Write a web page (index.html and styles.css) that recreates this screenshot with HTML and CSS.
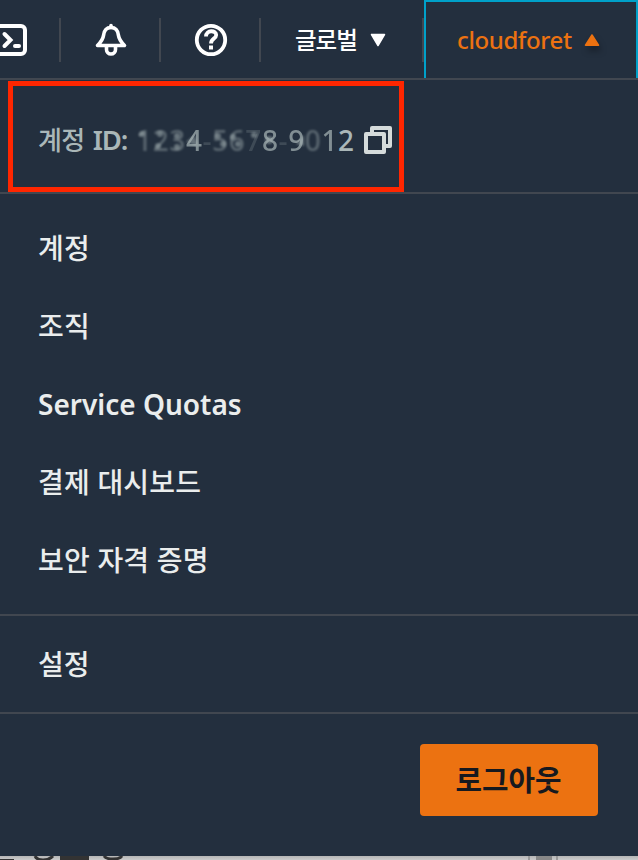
FILE: index.html
```html
<!DOCTYPE html>
<html lang="ko">
<head>
<meta charset="utf-8">
<title>계정 메뉴</title>
<link rel="stylesheet" href="styles.css">
</head>
<body>
<div class="page">
  <header class="nav">
    <div class="nav-item nav-shell">
      <svg width="28" height="34" viewBox="0 0 28 34" fill="none" stroke="#fff" stroke-width="4">
        <rect x="-6" y="3" width="31" height="28" rx="4"/>
        <path d="M4.500 11l6 6-6 6" stroke-width="4" stroke-linecap="round"/>
        <path d="M15 23h4" stroke-linecap="round"/>
      </svg>
    </div>
    <div class="nav-item nav-icon">
      <svg width="34" height="34" viewBox="0 0 34 34" fill="none" stroke="#fff" stroke-width="3.6" stroke-linejoin="round">
        <path d="M17 2.500v2" stroke-linecap="round"/>
        <path d="M3.500 22.500C7.500 18.500 9 16.500 9.500 12.500C10 8 12.500 4.500 17 4.500s7 3.500 7.500 8C25 16.500 26.500 18.500 30.500 22.500z"/>
        <path d="M12.500 23.500v3a4.500 4.500 0 0 0 9 0v-3"/>
      </svg>
    </div>
    <div class="nav-item nav-icon">
      <svg width="34" height="34" viewBox="0 0 34 34" fill="none" stroke="#fff" stroke-width="3.800">
        <circle cx="17" cy="17" r="14.200"/>
        <path d="M12 13.500c0-7 10.200-6.500 10.200-1.500 0 3.500-5.200 3.800-5.200 8.500"/>
        <path d="M15 24.500h4" stroke-width="4"/>
      </svg>
    </div>
    <div class="nav-item nav-region">
      <span>글로벌</span>
      <svg width="16" height="14" viewBox="0 0 16 14"><path d="M1.500 1.500h13L8 12.500z" fill="#fff" stroke="#fff" stroke-width="1.500" stroke-linejoin="round"/></svg>
    </div>
    <div class="nav-account">
      <span>cloudforet</span>
      <svg class="caret-up" width="16" height="14" viewBox="0 0 16 14"><path d="M1.500 12.200h13L8 2z" fill="#ec7211" stroke="#ec7211" stroke-width="1.500" stroke-linejoin="round"/></svg>
    </div>
  </header>
  <section class="account-id">
    <span class="id-label">계정 <span class="id-latin">ID:</span></span>
    <span class="id-number"><span class="faint">1</span><span class="faint">2</span><span class="faint">3</span><span class="mid">4</span><span class="dim">-</span><span class="faint">5</span><span class="faint">6</span><span class="dim">7</span><span class="mid">8</span><span class="dim">-</span><span class="mid">9</span><span class="faint">0</span><span class="mid">1</span><span>2</span><svg class="smudge" width="217" height="20" viewBox="0 0 217 20" fill="#aab7b8">
      <circle cx="6" cy="4" r="3"/><circle cx="24" cy="4" r="3"/><circle cx="22" cy="16" r="3"/><circle cx="41" cy="6" r="3"/><circle cx="41" cy="17" r="3"/><path d="M50 12l8-7 5 12z"/><circle cx="82" cy="6" r="3"/><circle cx="87" cy="14" r="3"/><circle cx="97" cy="7" r="3"/><circle cx="102" cy="14" r="3"/><circle cx="118" cy="5" r="3"/><circle cx="133" cy="10" r="4"/><path d="M160 14l8-9v11z"/></svg></span>
    <svg class="copy" width="28" height="28" viewBox="0 0 28 28" fill="none" stroke="#d5dbdb" stroke-width="4" stroke-linejoin="round">
      <path d="M8 6V2h18v18h-4"/>
      <rect x="2" y="8" width="18" height="18"/>
    </svg>
    <div class="highlight"></div>
  </section>
  <ul class="menu">
    <li>계정</li>
    <li>조직</li>
    <li class="latin">Service Quotas</li>
    <li>결제 대시보드</li>
    <li>보안 자격 증명</li>
  </ul>
  <section class="settings">설정</section>
  <footer class="actions"><button class="logout" type="button">로그아웃</button></footer>
  <svg class="under" width="638" height="4" viewBox="0 0 638 4">
    <path d="M0 3h14v1H0zM60 0h29v4H60z" fill="#333"/>
    <path d="M35 0q2 4 8 4t10-4M104 0q2 3 9 3t9-3" fill="none" stroke="#333" stroke-width="3"/>
    <path d="M528 0h2v4h-2zM556 0h2v4h-2z" fill="#999"/>
    <path d="M536 0h16v4h-16z" fill="#888"/>
  </svg>
</div>
</body>
</html>
```
FILE: styles.css
```css
* { box-sizing: border-box; }

body {
  margin: 0;
  background: #c5c5c5;
  color: #eaeded;
  font: 500 28px/36px "Noto Sans", "Noto Sans CJK KR", sans-serif;
}

.page {
  width: 638px;
  height: 860px;
  overflow: hidden;
  display: flex;
  flex-direction: column;
  background: linear-gradient(#b5b5b5, #cbcbcb) bottom / 100% 4px no-repeat;
}

.page > :not(.under) { background: #232f3e; }
.page > * { flex-shrink: 0; }

svg { display: block; flex: none; overflow: visible; }
.under { overflow: hidden; }

.nav {
  display: flex;
  align-items: center;
  height: 80px;
  border-bottom: 2px solid #414750;
}

.nav-item {
  display: flex;
  align-items: center;
  height: 44px;
  margin-top: 2px;
  border-right: 2px solid #414750;
}

.nav-shell { width: 61px; }
.nav-icon { width: 100px; padding-left: 2px; justify-content: center; }

.nav-region {
  width: 163px;
  padding-left: 34px;
  gap: 13px;
  color: #fff;
  font-size: 23.5px;
  letter-spacing: -1px;
}

.nav-account {
  display: flex;
  align-items: center;
  width: 214px;
  height: 78px;
  padding: 0 0 0 31px;
  gap: 12px;
  border: 2px solid #00a1c9;
  border-bottom: 0;
  color: #ec7211;
  font-size: 24px;
  letter-spacing: -0.4px;
}

.caret-up { filter: drop-shadow(2px 5px 3px rgba(0, 0, 0, .3)); }

.account-id {
  position: relative;
  display: flex;
  align-items: center;
  height: 114px;
  padding: 7px 0 0 38px;
  border-bottom: 2px solid #414750;
  color: #aab7b8;
}

.id-label {
  width: 98px;
  font-size: 26px;
  letter-spacing: -0.6px;
  white-space: nowrap;
}
.id-latin { margin-left: 2px; font-size: 27.5px; font-weight: 600; letter-spacing: -1.2px; }
.id-number { position: relative; display: flex; width: 220px; letter-spacing: .6px; }
.smudge { position: absolute; left: 0; top: 8px; opacity: .5; filter: blur(1.2px); }
.faint { opacity: .4; filter: blur(.9px); }
.mid { opacity: .7; filter: blur(.7px); }
.dim { opacity: .2; filter: blur(.5px); }
.copy { margin-left: 8px; }

.highlight {
  position: absolute;
  left: 7.5px;
  top: 1px;
  width: 396px;
  height: 111px;
  border: 5px solid #ff2600;
}

.menu {
  height: 422px;
  margin: 0;
  padding: 15px 0 0 38px;
  list-style: none;
  border-bottom: 2px solid #414750;
}

.menu li {
  display: flex;
  align-items: center;
  height: 78px;
  letter-spacing: .2px;
}

.menu .latin { font-weight: 600; letter-spacing: 0; }

.settings {
  display: flex;
  align-items: center;
  height: 98px;
  padding-left: 38px;
  border-bottom: 2px solid #414750;
}

.actions {
  display: flex;
  justify-content: flex-end;
  height: 142px;
  padding: 30px 40px 0 0;
}

.logout {
  width: 178px;
  height: 72px;
  padding: 0 1px 2px 0;
  border: 0;
  border-radius: 4px;
  background: #ec7211;
  color: #16191f;
  font: 700 28.8px/36px "Noto Sans CJK KR", sans-serif;
}
```
